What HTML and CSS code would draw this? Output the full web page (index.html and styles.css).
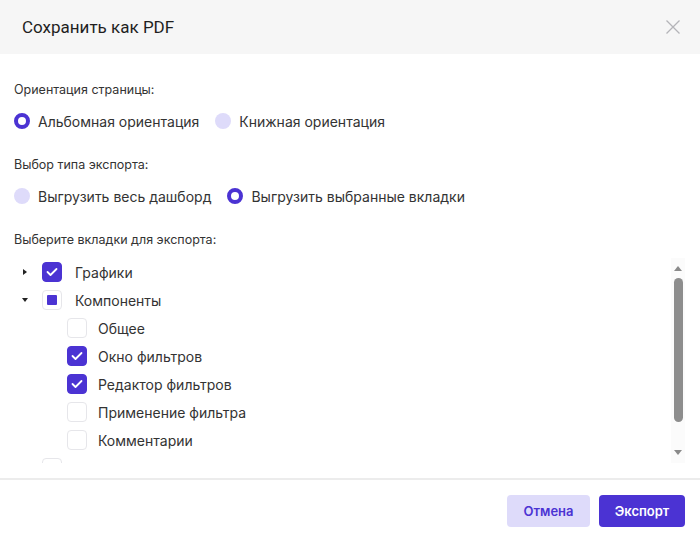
FILE: index.html
```html
<!DOCTYPE html>
<html lang="ru">

<head>
    <meta charset="UTF-8">
    <meta name="viewport" content="width=device-width, initial-scale=1.0">
    <title>Сохранить как PDF</title>
    <link rel="stylesheet" href="styles.css">
</head>

<body>
    <div class="dialog">
        <div class="dialog-header">
            <h1>Сохранить как PDF</h1>
            <button class="close-btn" aria-label="Закрыть">
                <svg width="16" height="16" viewBox="0 0 16 16">
                    <path d="M1.5 1.5 L14.5 14.5 M14.5 1.5 L1.5 14.5" stroke="#b4b4b8" stroke-width="1.3" fill="none"/>
                </svg>
            </button>
        </div>

        <div class="dialog-body">
            <p class="field-label">Ориентация страницы:</p>
            <div class="radio-group">
                <label class="radio checked"><span class="dot"></span>Альбомная ориентация</label>
                <label class="radio"><span class="dot"></span>Книжная ориентация</label>
            </div>

            <p class="field-label">Выбор типа экспорта:</p>
            <div class="radio-group">
                <label class="radio"><span class="dot"></span>Выгрузить весь дашборд</label>
                <label class="radio checked"><span class="dot"></span>Выгрузить выбранные вкладки</label>
            </div>

            <p class="field-label">Выберите вкладки для экспорта:</p>
            <div class="tree-box">
                <div class="tree">
                    <div class="tree-row">
                        <span class="caret"><span class="tri-right"></span></span>
                        <span class="box checked"><svg width="12" height="10" viewBox="0 0 12 10"><path d="M1.5 5 L4.5 8 L10.5 2" stroke="#fff" stroke-width="1.8" fill="none" stroke-linecap="round" stroke-linejoin="round"/></svg></span>
                        <span class="tree-text">Графики</span>
                    </div>
                    <div class="tree-row">
                        <span class="caret"><span class="tri-down"></span></span>
                        <span class="box partial"><span class="mark"></span></span>
                        <span class="tree-text">Компоненты</span>
                    </div>
                    <div class="tree-row child">
                        <span class="box"></span>
                        <span class="tree-text">Общее</span>
                    </div>
                    <div class="tree-row child">
                        <span class="box checked"><svg width="12" height="10" viewBox="0 0 12 10"><path d="M1.5 5 L4.5 8 L10.5 2" stroke="#fff" stroke-width="1.8" fill="none" stroke-linecap="round" stroke-linejoin="round"/></svg></span>
                        <span class="tree-text">Окно фильтров</span>
                    </div>
                    <div class="tree-row child">
                        <span class="box checked"><svg width="12" height="10" viewBox="0 0 12 10"><path d="M1.5 5 L4.5 8 L10.5 2" stroke="#fff" stroke-width="1.8" fill="none" stroke-linecap="round" stroke-linejoin="round"/></svg></span>
                        <span class="tree-text">Редактор фильтров</span>
                    </div>
                    <div class="tree-row child">
                        <span class="box"></span>
                        <span class="tree-text">Применение фильтра</span>
                    </div>
                    <div class="tree-row child">
                        <span class="box"></span>
                        <span class="tree-text">Комментарии</span>
                    </div>
                    <div class="tree-row">
                        <span class="caret"></span>
                        <span class="box"></span>
                    </div>
                </div>
                <div class="scrollbar">
                    <span class="arrow-up"></span>
                    <span class="thumb"></span>
                    <span class="arrow-down"></span>
                </div>
            </div>
        </div>

        <div class="dialog-footer">
            <button class="btn btn-cancel">Отмена</button>
            <button class="btn btn-primary">Экспорт</button>
        </div>
    </div>
</body>

</html>
```

FILE: styles.css
```css
body {
    margin: 0;
    background-color: #fff;
    font-family: 'Inter', 'Noto Sans', sans-serif;
    color: #2b2b2b;
}

.dialog {
    width: 700px;
    height: 542px;
    display: flex;
    flex-direction: column;
}

.dialog-header {
    height: 54px;
    background-color: #f6f6f6;
    display: flex;
    align-items: center;
    justify-content: space-between;
    padding: 0 19px 0 22px;
}

.dialog-header h1 {
    margin: 0;
    font-family: 'Roboto', 'Liberation Sans', sans-serif;
    font-size: 17px;
    font-weight: 400;
    color: #1f1f1f;
}

.close-btn {
    border: none;
    background: none;
    padding: 0;
    display: flex;
    cursor: pointer;
}

.dialog-body {
    flex: 1;
    padding: 0 15px 0 14px;
}

.field-label {
    margin: 0;
    font-size: 12.5px;
    line-height: 18px;
    color: #333;
}

.dialog-body .field-label:first-child {
    margin-top: 27px;
}

.radio-group {
    display: flex;
    gap: 16px;
    height: 24px;
    align-items: center;
    margin: 10px 0 23px;
}

.radio {
    display: flex;
    align-items: center;
    gap: 8px;
    font-size: 14px;
    color: #333;
    cursor: pointer;
}

.dot {
    width: 16px;
    height: 16px;
    border-radius: 50%;
    background-color: #dedbfa;
    box-sizing: border-box;
}

.radio.checked .dot {
    background-color: #fff;
    border: 4.5px solid #4b33d3;
}

.tree-box {
    display: flex;
    margin-top: 9px;
    height: 205px;
}

.tree {
    flex: 1;
    overflow: hidden;
}

.tree-row {
    height: 28px;
    display: flex;
    align-items: center;
}

.tree-row.child {
    padding-left: 53px;
}

.caret {
    width: 22px;
    height: 10px;
    margin-right: 6px;
    display: flex;
    align-items: center;
    justify-content: center;
}

.tri-right {
    border-left: 4px solid #222;
    border-top: 3.5px solid transparent;
    border-bottom: 3.5px solid transparent;
}

.tri-down {
    border-top: 4px solid #222;
    border-left: 3.5px solid transparent;
    border-right: 3.5px solid transparent;
}

.box {
    width: 20px;
    height: 20px;
    box-sizing: border-box;
    border: 1px solid #e6e6ea;
    border-radius: 4px;
    background-color: #fff;
    display: flex;
    align-items: center;
    justify-content: center;
    margin-right: 13px;
}

.child .box {
    margin-right: 11px;
}

.box.checked {
    background-color: #4b33d3;
    border-color: #4b33d3;
}

.box .mark {
    width: 10px;
    height: 10px;
    background-color: #4b33d3;
    border-radius: 1px;
}

.tree-text {
    font-size: 14px;
    color: #333;
}

.scrollbar {
    width: 14px;
    background-color: #fbfbfb;
    display: flex;
    flex-direction: column;
    align-items: center;
    padding-top: 8px;
}

.arrow-up {
    border-bottom: 5px solid #8a8a8a;
    border-left: 4.5px solid transparent;
    border-right: 4.5px solid transparent;
}

.thumb {
    width: 9px;
    height: 144px;
    margin-top: 7px;
    border-radius: 5px;
    background-color: #8d8d8d;
}

.arrow-down {
    margin-top: 28px;
    border-top: 5px solid #8a8a8a;
    border-left: 4.5px solid transparent;
    border-right: 4.5px solid transparent;
}

.dialog-footer {
    border-top: 2px solid #ececec;
    height: 62px;
    display: flex;
    justify-content: flex-end;
    align-items: center;
    gap: 9px;
    padding: 0 15px;
    margin-top: 15px;
}

.btn {
    height: 32px;
    border: none;
    border-radius: 4px;
    font-family: 'Inter', 'Noto Sans', sans-serif;
    font-size: 13px;
    font-weight: 600;
    cursor: pointer;
}

.btn-cancel {
    width: 83px;
    background-color: #dedbfa;
    color: #4b33d3;
}

.btn-primary {
    width: 86px;
    background-color: #4b33d3;
    color: #fff;
}
```
